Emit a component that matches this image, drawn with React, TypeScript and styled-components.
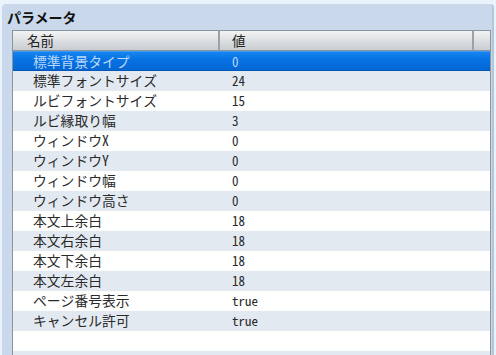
import React from "react";
import styled, { createGlobalStyle } from "styled-components";

const Global = createGlobalStyle`
  html, body { margin: 0; padding: 0; }
  body {
    background: #eaf2fc;
    width: 496px;
    height: 355px;
    overflow: hidden;
    font-family: "Noto Sans CJK JP", "Noto Sans", sans-serif;
  }
`;

const Panel = styled.section`
  margin: 4px 2px 0 2px;
  height: 351px;
  background: #c9d9eb;
  border-radius: 4px 4px 0 0;
  border-right: 2px solid #b3c6da;
  box-sizing: border-box;
  display: flex;
  flex-direction: column;
  padding: 0 0 0 10px;
`;

const Title = styled.h2`
  margin: 0 0 0 -5px;
  height: 26px;
  font-size: 14px;
  font-weight: bold;
  line-height: 26px;
  color: #111;
`;

const Table = styled.div`
  width: 479px;
  flex: 1;
  border: 1px solid #8c949d;
  border-bottom: none;
  background: #fff;
  overflow: hidden;
  box-sizing: border-box;
`;

const Columns = "207px 254px 1fr";

const Header = styled.div`
  display: grid;
  grid-template-columns: ${Columns};
  height: 19px;
  background: linear-gradient(#f2f3f4, #d9dcdf 60%, #c9ccd0);
  border-bottom: 1px solid #8c949d;
`;

const HeadCell = styled.div<{ $last?: boolean; $first?: boolean }>`
  border-right: ${(p) => (p.$last ? "none" : "2px solid #9aa1a8")};
  padding-left: ${(p) => (p.$first ? 14 : 12)}px;
  font-size: 13.5px;
  line-height: 19px;
  color: #222;
  box-sizing: border-box;
`;

const Row = styled.div<{ $selected?: boolean; $alt?: boolean }>`
  display: grid;
  grid-template-columns: ${Columns};
  height: 20px;
  box-sizing: border-box;
  background: ${(p) =>
    p.$selected
      ? "linear-gradient(#1584f0, #0873e4 40%, #0567d2)"
      : p.$alt
      ? "#e3e9f1"
      : "#ffffff"};
  border-top: ${(p) => (p.$selected ? "1px solid #3c9af5" : "none")};
  border-bottom: ${(p) => (p.$selected ? "1px solid #0658b8" : "none")};
  color: ${(p) => (p.$selected ? "#b9d8fb" : "#2a2a2a")};
`;

const NameCell = styled.div`
  padding-left: 20px;
  font-family: "Noto Sans Mono CJK JP", "Noto Sans CJK JP", sans-serif;
  font-size: 13.8px;
  line-height: 19px;
  white-space: nowrap;
`;

const ValueCell = styled.div`
  padding-left: 12px;
  font-family: "Noto Sans Mono CJK JP", "DejaVu Sans Mono", monospace;
  font-size: 13px;
  line-height: 19px;
`;

const rows: [string, string][] = [
  ["標準背景タイプ", "0"],
  ["標準フォントサイズ", "24"],
  ["ルビフォントサイズ", "15"],
  ["ルビ縁取り幅", "3"],
  ["ウィンドウX", "0"],
  ["ウィンドウY", "0"],
  ["ウィンドウ幅", "0"],
  ["ウィンドウ高さ", "0"],
  ["本文上余白", "18"],
  ["本文右余白", "18"],
  ["本文下余白", "18"],
  ["本文左余白", "18"],
  ["ページ番号表示", "true"],
  ["キャンセル許可", "true"],
  ["", ""],
  ["", ""],
];

export default function App() {
  return (
    <>
      <Global />
      <Panel>
        <Title>パラメータ</Title>
        <Table>
          <Header>
            <HeadCell $first>名前</HeadCell>
            <HeadCell>値</HeadCell>
            <HeadCell $last />
          </Header>
          {rows.map(([n, v], i) => (
            <Row key={i} $selected={i === 0} $alt={i % 2 === 1}>
              <NameCell>{n}</NameCell>
              <ValueCell>{v}</ValueCell>
              <div />
            </Row>
          ))}
        </Table>
      </Panel>
    </>
  );
}
